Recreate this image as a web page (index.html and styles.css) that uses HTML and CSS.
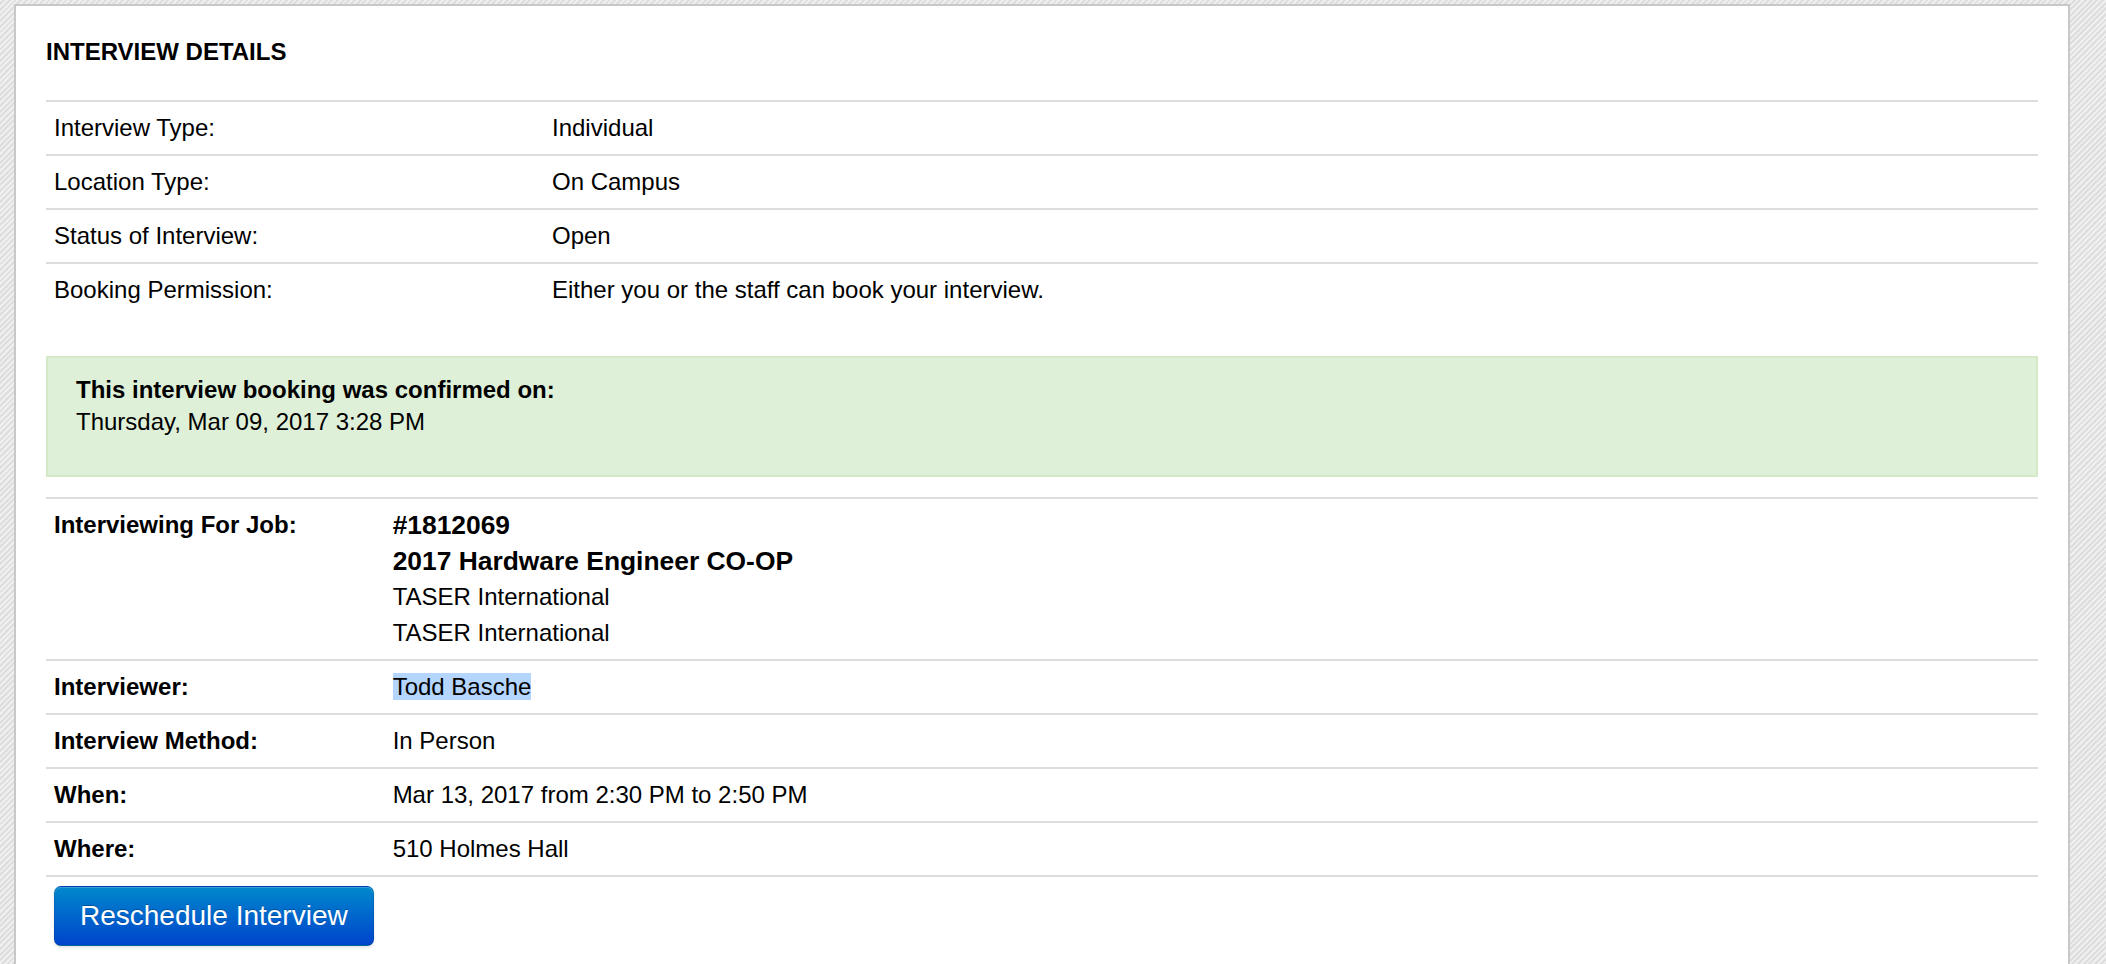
FILE: index.html
```html
<!DOCTYPE html>
<html lang="en">
<head>
<meta charset="utf-8">
<title>Interview Details</title>
<link rel="stylesheet" href="styles.css">
</head>
<body>
<div class="card">
  <h2 class="title">INTERVIEW DETAILS</h2>
  <table class="info">
    <tr><td class="lbl">Interview Type:</td><td>Individual</td></tr>
    <tr><td class="lbl">Location Type:</td><td>On Campus</td></tr>
    <tr><td class="lbl">Status of Interview:</td><td>Open</td></tr>
    <tr><td class="lbl">Booking Permission:</td><td>Either you or the staff can book your interview.</td></tr>
  </table>

  <div class="alert">
    <div class="alert-head">This interview booking was confirmed on:</div>
    <div>Thursday, Mar 09, 2017 3:28 PM</div>
  </div>

  <table class="job">
    <tr>
      <th>Interviewing For Job:</th>
      <td>
        <div class="big">#1812069</div>
        <div class="big">2017 Hardware Engineer CO-OP</div>
        <div>TASER International</div>
        <div>TASER International</div>
      </td>
    </tr>
    <tr><th>Interviewer:</th><td><span class="sel">Todd Basche</span></td></tr>
    <tr><th>Interview Method:</th><td>In Person</td></tr>
    <tr><th>When:</th><td>Mar 13, 2017 from 2:30 PM to 2:50 PM</td></tr>
    <tr class="last"><th>Where:</th><td>510 Holmes Hall</td></tr>
  </table>

  <button class="btn" type="button">Reschedule Interview</button>
</div>
</body>
</html>
```
FILE: styles.css
```css
html, body {
  margin: 0;
  height: 100%;
}
body {
  padding: 4px 36px 0 14px;
  box-sizing: border-box;
  overflow: hidden;
  background-color: #e8e8e8;
  background-image: repeating-linear-gradient(135deg, #efefef 0, #efefef 2px, #dedede 2px, #dedede 4px);
  font-family: "Liberation Sans", Arial, Helvetica, sans-serif;
  font-size: 24px;
  color: #000;
}
.card {
  background: #fff;
  border: 2px solid #c8c8c8;
  padding: 28px 30px 60px 30px;
}
.title {
  margin: 0 0 30px 0;
  font-size: 24px;
  line-height: 36px;
  font-weight: bold;
}
table {
  width: 100%;
  border-collapse: separate;
  border-spacing: 0;
}
td, th {
  padding: 8px;
  line-height: 36px;
  border-top: 2px solid #dddddd;
  text-align: left;
  vertical-align: top;
  font-size: 24px;
}
.info .lbl {
  width: 25%;
}
.alert {
  margin-top: 40px;
  background: #dff0d8;
  border: 2px solid #d6e9c6;
  padding: 16px 28px 37px 28px;
  line-height: 32px;
}
.alert-head {
  font-weight: bold;
}
.job {
  margin-top: 20px;
}
.job th {
  width: 17%;
  font-weight: bold;
}
.job .last th, .job .last td {
  border-bottom: 2px solid #dddddd;
}
.big {
  font-size: 26.4px;
  font-weight: bold;
}
.sel {
  background: #b4d5fe;
}
.btn {
  display: block;
  margin: 9px 0 0 8px;
  padding: 13px 25px;
  font-family: "Liberation Sans", Arial, Helvetica, sans-serif;
  font-size: 28px;
  line-height: 32px;
  color: #fff;
  text-shadow: 0 -1px 0 rgba(0, 0, 0, 0.25);
  background-color: #006dcc;
  background-image: linear-gradient(to bottom, #0088cc, #0044cc);
  border: 1px solid rgba(0, 0, 0, 0.1);
  border-bottom-color: rgba(0, 0, 0, 0.25);
  border-radius: 7px;
  box-shadow: inset 0 1px 0 rgba(255, 255, 255, 0.2), 0 2px 3px rgba(0, 0, 0, 0.1);
  cursor: pointer;
}
```
